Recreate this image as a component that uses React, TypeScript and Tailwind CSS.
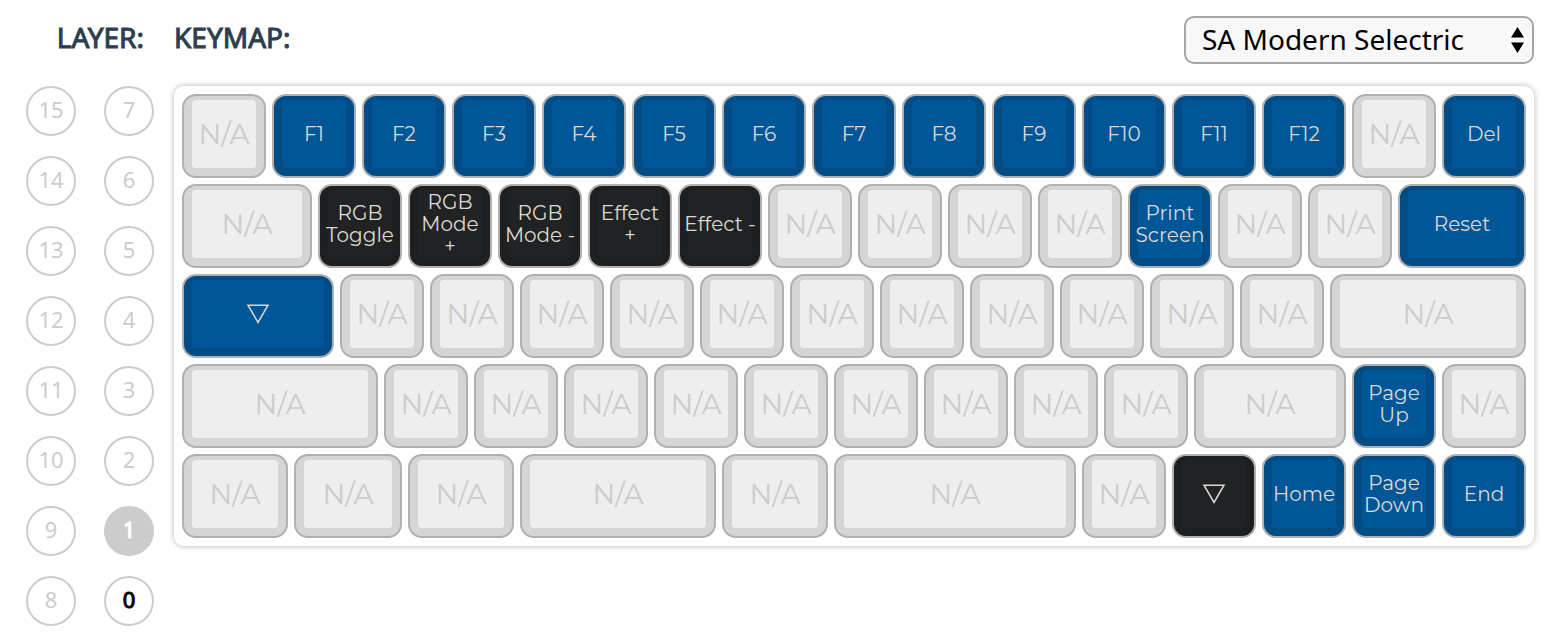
import React from "react";

type Tone = "none" | "blue" | "black";
type KeyDef = { span: number; tone: Tone; lines: string[] };

const UNIT = 90;
const na = (span = UNIT): KeyDef => ({ span, tone: "none", lines: ["N/A"] });
const nas = (count: number): KeyDef[] => Array.from({ length: count }, () => na());
const blue = (text: string, span = UNIT): KeyDef => ({ span, tone: "blue", lines: text.split("|") });
const black = (text: string, span = UNIT): KeyDef => ({ span, tone: "black", lines: text.split("|") });

const ROWS: KeyDef[][] = [
  [
    na(),
    ...["F1", "F2", "F3", "F4", "F5", "F6", "F7", "F8", "F9", "F10", "F11", "F12"].map((f) => blue(f)),
    na(),
    blue("Del"),
  ],
  [
    na(136),
    black("RGB|Toggle"),
    black("RGB|Mode|+"),
    black("RGB|Mode -"),
    black("Effect|+"),
    black("Effect -"),
    ...nas(4),
    blue("Print|Screen"),
    ...nas(2),
    blue("Reset", 134),
  ],
  [blue("▽", 158), ...nas(11), na(202)],
  [na(202), ...nas(9), na(158), blue("Page|Up"), na()],
  [
    na(112),
    na(114),
    na(112),
    na(202),
    na(112),
    na(248),
    na(),
    black("▽"),
    blue("Home"),
    blue("Page|Down"),
    blue("End"),
  ],
];

const LAYERS = [15, 7, 14, 6, 13, 5, 12, 4, 11, 3, 10, 2, 9, 1, 8, 0];

const BASE: Record<Tone, string> = {
  none: "bg-[#d5d5d5] text-[#cccccc]",
  blue: "bg-[#004c87] text-[#d8d8d8]",
  black: "bg-[#1e1f21] text-[#dcdad0]",
};

const CAP: Record<Tone, string> = {
  none: "bg-[#eeeeee] text-[28px] leading-[28px]",
  blue: "bg-[#015697] text-[20px] leading-[22px]",
  black: "bg-[#212224] text-[20px] leading-[22px]",
};

function Key({ def }: { def: KeyDef }) {
  return (
    <div className="min-w-0 p-[3px]">
      <button
        type="button"
        className={`flex h-[84px] w-full min-w-0 rounded-[14px] border-2 border-[#b0b0b0] px-2 pt-1 pb-2 font-['Montserrat','Inter',sans-serif] font-normal ${BASE[def.tone]}`}
      >
        <span
          className={`flex h-full w-full min-w-0 flex-col items-center justify-center rounded-[4px] whitespace-nowrap ${CAP[def.tone]}`}
        >
          {def.lines[0] === "▽" ? (
            <svg width="24" height="20" viewBox="0 0 24 20" fill="none" role="img" aria-label="Momentary layer">
              <path d="M2 1.25H22L12 18.5Z" stroke="currentColor" strokeWidth="1.5" />
            </svg>
          ) : (
            def.lines.map((line) => <span key={line}>{line}</span>)
          )}
        </span>
      </button>
    </div>
  );
}

function LayerButton({ layer }: { layer: number }) {
  const look =
    layer === 1
      ? "bg-[#cccccc] text-white [-webkit-text-stroke:1px_currentColor]"
      : layer === 0
        ? "bg-white text-black [-webkit-text-stroke:1px_currentColor]"
        : "bg-white text-[#cccccc]";
  return (
    <button
      type="button"
      className={`flex size-[50px] items-center justify-center rounded-full border-2 border-[#cccccc] pb-1 text-[22px] leading-6 ${look}`}
    >
      {layer}
    </button>
  );
}

export default function App() {
  return (
    <main className="grid grid-cols-[128px_1fr] gap-x-5 gap-y-[22px] bg-white pt-4 pr-4 pb-4 pl-[26px] font-['Noto_Sans','Open_Sans',sans-serif]">
      <h2 className="pr-[10px] text-right text-[28px] leading-[42px] text-[#2c3e50] [-webkit-text-stroke:1px_currentColor]">
        LAYER:
      </h2>
      <div className="flex items-start justify-between">
        <label
          htmlFor="colorway"
          className="text-[28px] leading-[42px] text-[#2c3e50] [-webkit-text-stroke:1px_currentColor]"
        >
          KEYMAP:
        </label>
        <div className="relative">
          <select
            id="colorway"
            className="h-12 w-[350px] appearance-none rounded-[10px] border-2 border-[#a6a6a6] bg-[#f8f8f8] pr-10 pb-[2px] pl-4 text-[28px] leading-[40px] text-black"
          >
            <option>SA Modern Selectric</option>
          </select>
          <svg
            className="pointer-events-none absolute top-[11px] right-[10px]"
            width="13"
            height="26"
            viewBox="0 0 13 26"
            aria-hidden="true"
          >
            <path d="M6.5 0L13 10.5H0ZM0 15.5H13L6.5 26Z" fill="#000" />
          </svg>
        </div>
      </div>
      <div className="grid grid-cols-2 content-start justify-items-start gap-x-7 gap-y-5">
        {LAYERS.map((layer) => (
          <LayerButton key={layer} layer={layer} />
        ))}
      </div>
      <section className="flex min-w-0 flex-col self-start rounded-[10px] bg-white p-[5px] shadow-[0_0_6px_rgba(0,0,0,0.3)]">
        {ROWS.map((row, r) => (
          <div
            key={r}
            className="grid"
            style={{ gridTemplateColumns: row.map((def) => `minmax(0, ${def.span}fr)`).join(" ") }}
          >
            {row.map((def, k) => (
              <Key key={k} def={def} />
            ))}
          </div>
        ))}
      </section>
    </main>
  );
}
